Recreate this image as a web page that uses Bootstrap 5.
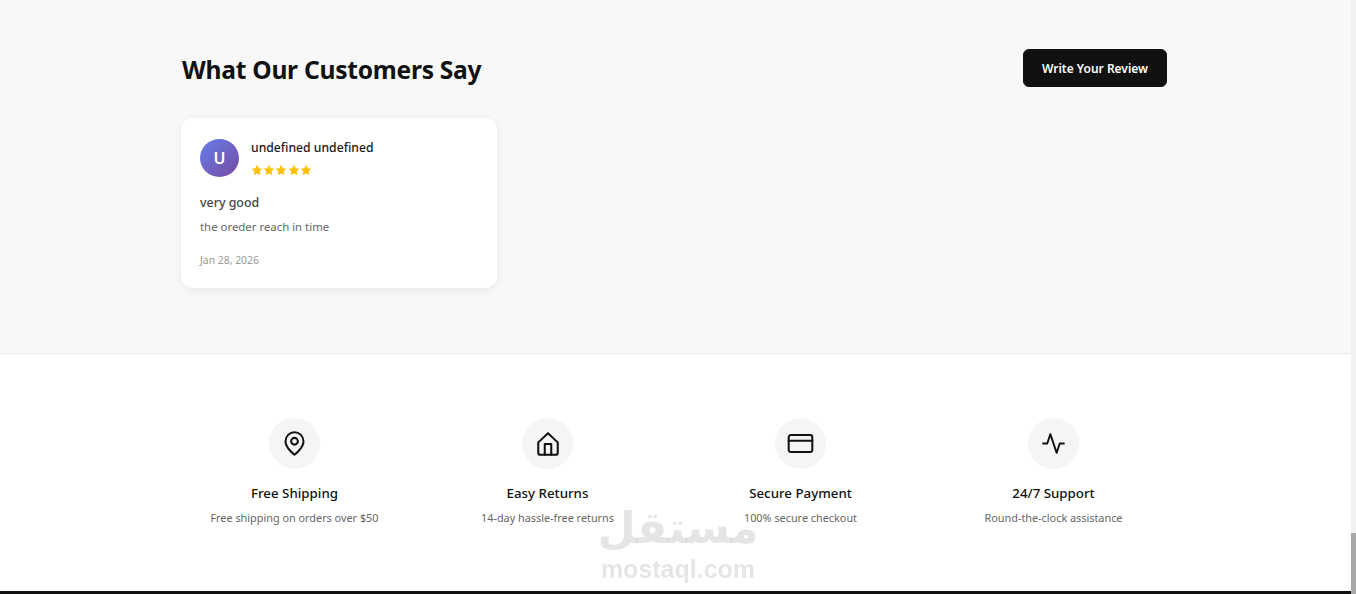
<!DOCTYPE html>
<html lang="en">
<head>
  <meta charset="UTF-8">
  <meta name="viewport" content="width=device-width, initial-scale=1.0">
  <title>Customer Reviews</title>
  <link href="https://cdn.jsdelivr.net/npm/bootstrap@5.3.1/dist/css/bootstrap.min.css" rel="stylesheet">
  <style>
    html, body {
      height: 594px;
      overflow: hidden;
    }
    body {
      font-family: "Noto Sans", "Open Sans", sans-serif;
      color: #111;
      background: #fff;
    }
    .page-wrap {
      width: 1351px;
      height: 594px;
      display: flex;
      flex-direction: column;
    }
    .inner-wrap {
      width: 986px;
      margin-left: 181px;
    }
    .reviews-section {
      height: 354px;
      background: #f8f8f8;
      border-bottom: 1px solid #eaeaea;
      padding-top: 49px;
    }
    .reviews-head {
      height: 38px;
      margin-bottom: 31px;
    }
    .reviews-title {
      font-size: 24.6px;
      font-weight: 700;
      letter-spacing: -0.27px;
      margin: 4px 0 0 1px;
      color: #111;
    }
    .write-btn {
      width: 144px;
      height: 38px;
      background: #111;
      border-color: #111;
      color: #fff;
      font-size: 12px;
      font-weight: 600;
      border-radius: 6px;
      padding: 1px 0 0;
    }
    .review-box {
      width: 316px;
      height: 170px;
      background: #fff;
      border-radius: 12px;
      box-shadow: 0 2px 10px rgba(0, 0, 0, 0.07);
      padding: 21px 19px;
    }
    .avatar-round {
      width: 39px;
      height: 38px;
      border-radius: 50%;
      background: linear-gradient(135deg, #667eea, #764ba2);
      color: #fff;
      font-size: 16px;
      font-weight: 600;
      flex-shrink: 0;
    }
    .reviewer-name {
      font-size: 12.2px;
      font-weight: 500;
      line-height: 18px;
      color: #1a1a1a;
    }
    .star-row {
      margin-top: 7px;
      height: 12px;
    }
    .star-row svg {
      width: 12px;
      height: 12px;
      display: block;
      margin-right: 0.2px;
    }
    .review-title {
      font-size: 12.4px;
      font-weight: 500;
      line-height: 18px;
      color: #444;
      margin-top: 17px;
    }
    .review-text {
      font-size: 11.4px;
      line-height: 16px;
      color: #666;
      margin-top: 7px;
    }
    .review-date {
      font-size: 10.4px;
      line-height: 14px;
      color: #999;
      margin-top: 18px;
    }
    .features-section {
      flex-grow: 1;
      padding-top: 64px;
      background: #fff;
    }
    .features-row {
      --bs-gutter-x: 26px;
    }
    .feature-circle {
      width: 51px;
      height: 51px;
      border-radius: 50%;
      background: #f5f5f5;
      margin-bottom: 15px;
    }
    .feature-title {
      font-size: 13.3px;
      font-weight: 500;
      line-height: 18px;
      color: #111;
      margin-bottom: 8px;
    }
    .feature-text {
      font-size: 10.85px;
      line-height: 16px;
      color: #666;
    }
    .footer-strip {
      height: 3px;
      background: #111;
      flex-shrink: 0;
    }
    .fake-scrollbar {
      position: fixed;
      top: 0;
      right: 0;
      width: 5px;
      height: 594px;
      background: #f1f1f1;
    }
    .fake-thumb {
      position: absolute;
      top: 533px;
      left: 0;
      width: 5px;
      height: 61px;
      background: #a8a8a8;
    }
    .watermark {
      position: fixed;
      left: 595px;
      top: 500px;
      width: 166px;
      text-align: center;
      color: rgba(0, 0, 0, 0.1);
      pointer-events: none;
    }
    .watermark-ar {
      font-family: "DejaVu Sans", sans-serif;
      font-weight: 700;
      font-size: 44px;
      line-height: 56px;
    }
    .watermark-en {
      font-family: "Liberation Sans", sans-serif;
      font-weight: 700;
      font-size: 25px;
      line-height: 26px;
    }
  </style>
</head>
<body>
  <div class="page-wrap">
    <!-- Reviews -->
    <section class="reviews-section">
      <div class="inner-wrap">
        <div class="reviews-head d-flex justify-content-between align-items-center">
          <h2 class="reviews-title">What Our Customers Say</h2>
          <button class="btn write-btn" type="button">Write Your Review</button>
        </div>
        <div class="review-box">
          <div class="d-flex gap-2">
            <div class="avatar-round d-flex align-items-center justify-content-center me-1">U</div>
            <div>
              <div class="reviewer-name">undefined undefined</div>
              <div class="star-row d-flex" id="stars"></div>
            </div>
          </div>
          <div class="review-title">very good</div>
          <div class="review-text">the oreder reach in time</div>
          <div class="review-date">Jan 28, 2026</div>
        </div>
      </div>
    </section>

    <!-- Features -->
    <section class="features-section">
      <div class="inner-wrap">
        <div class="row row-cols-4 features-row text-center">
          <div class="col">
            <div class="feature-circle d-flex align-items-center justify-content-center mx-auto">
              <svg width="27" height="27" viewBox="0 0 24 24" fill="none" stroke="#111" stroke-width="1.8" stroke-linecap="round" stroke-linejoin="round"><path d="M20 10c0 6-8 12-8 12s-8-6-8-12a8 8 0 0 1 16 0Z"/><circle cx="12" cy="10" r="3"/></svg>
            </div>
            <div class="feature-title">Free Shipping</div>
            <div class="feature-text">Free shipping on orders over $50</div>
          </div>
          <div class="col">
            <div class="feature-circle d-flex align-items-center justify-content-center mx-auto">
              <svg width="26" height="26" viewBox="0 0 24 24" fill="none" stroke="#111" stroke-width="1.9" stroke-linecap="round" stroke-linejoin="round"><path d="M3 10.5 12 2l9 8.5V20a2 2 0 0 1-2 2H5a2 2 0 0 1-2-2Z"/><path d="M9 22V12h6v10"/></svg>
            </div>
            <div class="feature-title">Easy Returns</div>
            <div class="feature-text">14-day hassle-free returns</div>
          </div>
          <div class="col">
            <div class="feature-circle d-flex align-items-center justify-content-center mx-auto">
              <svg width="27" height="27" viewBox="0 0 24 24" fill="none" stroke="#111" stroke-width="1.8" stroke-linecap="round" stroke-linejoin="round"><rect x="1.5" y="4.5" width="21" height="15" rx="2"/><path d="M1.5 9.5h21"/></svg>
            </div>
            <div class="feature-title">Secure Payment</div>
            <div class="feature-text">100% secure checkout</div>
          </div>
          <div class="col">
            <div class="feature-circle d-flex align-items-center justify-content-center mx-auto">
              <svg width="25" height="25" viewBox="0 0 24 24" fill="none" stroke="#111" stroke-width="1.8" stroke-linecap="round" stroke-linejoin="round"><path d="M22 12h-4l-3 9L9 3l-3 9H2"/></svg>
            </div>
            <div class="feature-title">24/7 Support</div>
            <div class="feature-text">Round-the-clock assistance</div>
          </div>
        </div>
      </div>
    </section>

    <div class="footer-strip"></div>
  </div>

  <div class="watermark">
    <div class="watermark-ar">مستقل</div>
    <div class="watermark-en">mostaql.com</div>
  </div>

  <div class="fake-scrollbar"><div class="fake-thumb"></div></div>

  <script>
    const stars = document.getElementById('stars');
    for (let i = 0; i < 5; i++) {
      stars.innerHTML += '<svg viewBox="0 0 24 24" fill="#ffc107"><path d="M12 1.5l3.2 6.9 7.5.9-5.5 5.2 1.4 7.5L12 18.8l-6.6 3.7 1.4-7.5L1.3 9.3l7.5-.9Z"/></svg>';
    }
  </script>
  <script src="https://cdn.jsdelivr.net/npm/bootstrap@5.3.1/dist/js/bootstrap.bundle.min.js"></script>
</body>
</html>
